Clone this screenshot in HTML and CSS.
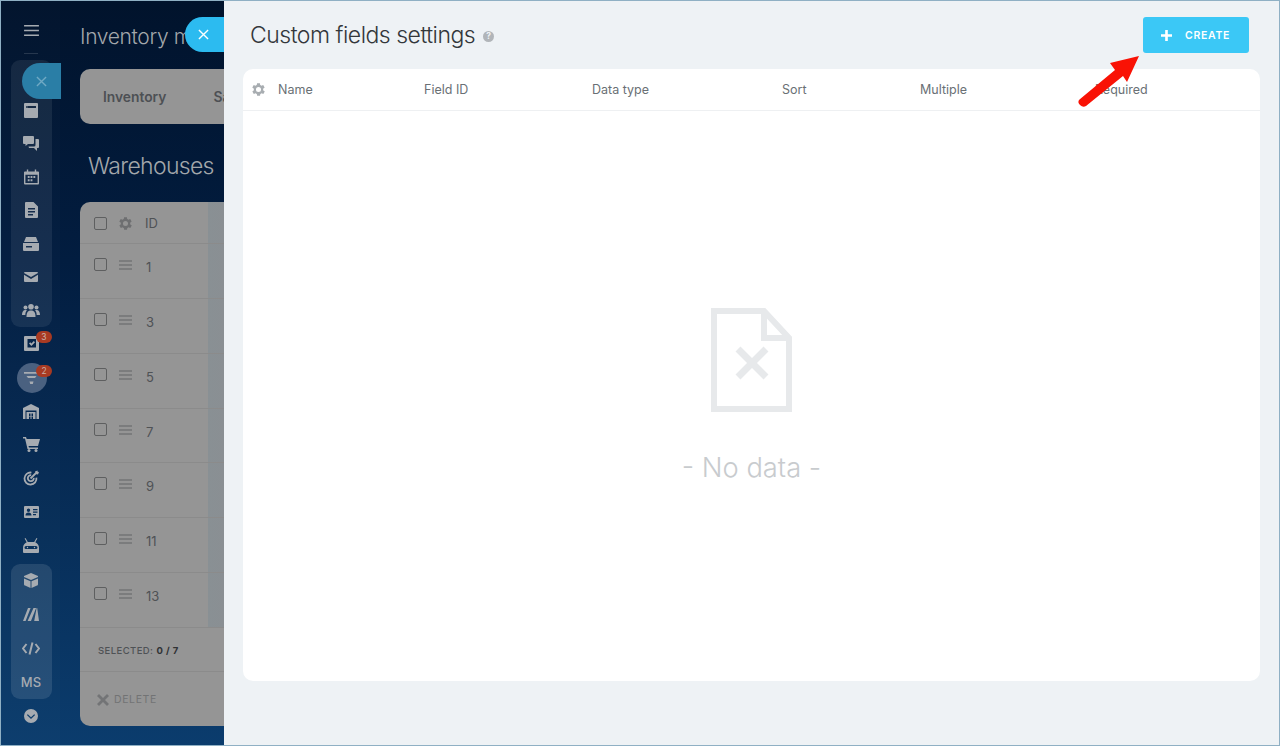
FILE: index.html
```html
<!DOCTYPE html>
<html lang="en">
<head>
<meta charset="utf-8">
<title>Custom fields settings</title>
<link rel="stylesheet" href="styles.css">
</head>
<body>
<div class="app">
  <nav class="sidebar">
    <div class="item burger"><svg viewBox="0 0 16 14" width="15" height="13"><path d="M0 1h16v1.600H0zM0 6.200h16v1.600H0zM0 11.400h16V13H0z"/></svg></div>
    <div class="group">
      <div class="item"></div>
      <div class="item"><svg viewBox="0 0 14 15" width="14" height="15"><path fill-rule="evenodd" d="M1 0h12a1 1 0 0 1 1 1v13a1 1 0 0 1-1 1H1a1 1 0 0 1-1-1V1a1 1 0 0 1 1-1zm1 3v2h10V3zm0 .800h2v.500H2z"/></svg></div>
      <div class="item"><svg viewBox="0 0 16 15" width="16" height="15"><path d="M1 0h9a1 1 0 0 1 1 1v6a1 1 0 0 1-1 1H5L2.500 10V8H1a1 1 0 0 1-1-1V1a1 1 0 0 1 1-1z"/><path d="M12.500 3H15a1 1 0 0 1 1 1v7a1 1 0 0 1-1 1h-1v3l-3-3H6l-.5-1.500H11a1.500 1.500 0 0 0 1.500-1.500z"/></svg></div>
      <div class="item"><svg viewBox="0 0 16 16" width="15" height="16"><path fill-rule="evenodd" d="M3 0h1.500v2h7V0H13v2h2a1 1 0 0 1 1 1v12a1 1 0 0 1-1 1H1a1 1 0 0 1-1-1V3a1 1 0 0 1 1-1h2zM1.500 5.500v9h13v-9zM4 7h2v2H4zm3 0h2v2H7zm3 0h2v2h-2zM4 10.500h2v2H4zm3 0h2v2H7z"/></svg></div>
      <div class="item"><svg viewBox="0 0 13 16" width="13" height="16"><path fill-rule="evenodd" d="M1 0h7.500L13 4.500V15a1 1 0 0 1-1 1H1a1 1 0 0 1-1-1V1a1 1 0 0 1 1-1zm2 6v1.400h7V6zm0 3v1.400h7V9zm0 3v1.400h5V12z"/></svg></div>
      <div class="item"><svg viewBox="0 0 16 14" width="16" height="14"><path fill-rule="evenodd" d="M3 0h10l2 5H1zM0 6h16v7a1 1 0 0 1-1 1H1a1 1 0 0 1-1-1zm3 3v1.500h6V9z"/></svg></div>
      <div class="item"><svg viewBox="0 0 14 10" width="14" height="10"><path d="M0 1a1 1 0 0 1 1-1h12a1 1 0 0 1 1 1L7 5zM0 2.800 7 7l7-4.200V9a1 1 0 0 1-1 1H1a1 1 0 0 1-1-1z"/></svg></div>
      <div class="item"><svg viewBox="0 0 18 13" width="18" height="13"><circle cx="9" cy="2.800" r="2.800"/><path d="M4.500 13c0-4 1-6.500 4.500-6.500s4.500 2.500 4.500 6.500z"/><circle cx="3.500" cy="3.500" r="2"/><circle cx="14.500" cy="3.500" r="2"/><path d="M0 11c0-3 1-5 3.500-5 .6 0 1 .1 1.400.3C3.800 7.500 3.400 9 3.300 11zM18 11c0-3-1-5-3.500-5-.6 0-1 .1-1.400.3 1.100 1.200 1.500 2.700 1.600 4.700z"/></svg></div>
    </div>
    <div class="item plain"><svg viewBox="0 0 15 15" width="15" height="15"><path fill-rule="evenodd" d="M1 0h13a1 1 0 0 1 1 1v13a1 1 0 0 1-1 1H1a1 1 0 0 1-1-1V1a1 1 0 0 1 1-1zm2.500 3v8.500H12V3zm1.500 4.500L6.200 6.300l1.200 1.200 2.400-2.500L11 6.200 7.400 9.900z"/></svg><span class="badge">3</span></div>
    <div class="item plain"><span class="halo"></span><svg viewBox="0 0 15 12" width="15" height="12"><path d="M0 0h15v1.800H0zM2.500 4h10L11 6H4zM5.500 9.500h4L8.800 12H6.200z"/></svg><span class="badge">2</span></div>
    <div class="item plain"><svg viewBox="0 0 16 15" width="16" height="15"><path fill-rule="evenodd" d="M8 0l8 4v11h-2.500V6.500h-11V15H0V4zM3.500 8h9v7h-9zM6 9.500V12h1.500V9.500zm2.500 0V12H10V9.500zM6 12.500V15h1.500v-2.500zm2.500 0V15H10v-2.500z"/></svg></div>
    <div class="item plain"><svg viewBox="0 0 17 15" width="17" height="15"><path d="M0 0h3l.7 2H17l-2 7H5.500L6 10.500h9V12H4.500L2 1.500H0z"/><circle cx="6" cy="13.500" r="1.500"/><circle cx="13" cy="13.500" r="1.500"/></svg></div>
    <div class="item plain"><svg viewBox="0 0 16 16" width="16" height="16" class="ring"><path d="M13.400 7.600A6 6 0 1 1 8.400 2.600M10.800 7.800A3 3 0 1 1 8.200 5.200"/><path d="M7.500 8.500 13 3"/><path class="tip" d="M12 1.500l2.500-1 .2 1.300 1.300.2-1 2.500-2.500-.5z"/></svg></div>
    <div class="item plain"><svg viewBox="0 0 15 12" width="15" height="12"><path fill-rule="evenodd" d="M1 0h13a1 1 0 0 1 1 1v10a1 1 0 0 1-1 1H1a1 1 0 0 1-1-1V1a1 1 0 0 1 1-1zm3.500 2.500a1.700 1.700 0 1 0 0 3.400 1.700 1.700 0 0 0 0-3.400zM1.500 9.500h6c0-1.700-1.200-3-3-3s-3 1.300-3 3zM9 3v1.200h4.500V3zm0 2.500v1.200h4.500V5.500zM9 8v1.200h3V8z"/></svg></div>
    <div class="item plain"><svg viewBox="0 0 16 15" width="16" height="15"><path fill-rule="evenodd" d="M2.500 0l2.300 4h6.400l2.300-4 .9.500L12.300 4.300c2.200.9 3.700 3 3.700 5.700v4a1 1 0 0 1-1 1H1a1 1 0 0 1-1-1v-4c0-2.700 1.500-4.800 3.700-5.700L1.600.5zM3 8a1.500 1.500 0 0 0 0 3h10a1.500 1.500 0 0 0 0-3zm1.500.8a.7.700 0 1 1 0 1.400.7.700 0 0 1 0-1.400zm7 0a.7.700 0 1 1 0 1.400.7.700 0 0 1 0-1.400z"/></svg></div>
    <div class="group second">
      <div class="item wide"><svg viewBox="0 0 14 15" width="14" height="15"><path d="M7 0l7 3v1L7 7 0 4V3z"/><path d="M0 5.500l6.500 2.800V15L1 12.600a1.500 1.500 0 0 1-1-1.400zM14 5.500l-6.500 2.800V15l5.500-2.400a1.500 1.500 0 0 0 1-1.400z"/></svg></div>
      <div class="item wide"><svg viewBox="0 0 16 13" width="16" height="13"><path d="M5 0h2.600L2.600 13H0zM10.500 0h2.600L8 13H4.600zM13.600 0h.6L16 13h-4.800z"/></svg></div>
      <div class="item wide"><svg viewBox="0 0 18 13" width="18" height="13" class="code"><path d="M4.500 2 1 6.500 4.500 11M13.500 2 17 6.500 13.500 11M10.500 0.500 7.500 12.500"/></svg></div>
      <div class="item wide ms">MS</div>
    </div>
    <div class="item plain"><svg viewBox="0 0 14 14" width="14" height="14"><path fill-rule="evenodd" d="M7 0a7 7 0 1 1 0 14A7 7 0 0 1 7 0zM3.800 5.200 2.900 6.100 7 10l4.100-3.900-.9-.9L7 8.200z"/></svg></div>
  </nav>

  <main class="content">
    <h1 class="page-title">Inventory management</h1>
    <div class="tabs"><span>Inventory</span><span>Sales</span><span>Purchases</span></div>
    <h2 class="section-title">Warehouses</h2>
    <section class="table">
      <div class="shade"></div>
      <div class="row head"><span class="check"></span><svg class="gear" viewBox="3 3 18 18" width="13" height="13"><path d="M19.400 13a7.500 7.500 0 0 0 0-2l2.100-1.600-2-3.500-2.500 1a7.500 7.500 0 0 0-1.700-1L15 3.300h-4l-.4 2.600a7.500 7.500 0 0 0-1.700 1l-2.500-1-2 3.500L6.600 11a7.500 7.500 0 0 0 0 2l-2.100 1.600 2 3.500 2.500-1a7.500 7.500 0 0 0 1.700 1l.4 2.600h4l.4-2.600a7.500 7.500 0 0 0 1.700-1l2.500 1 2-3.500zM13 15.500a3.500 3.500 0 1 1 0-7 3.500 3.500 0 0 1 0 7z" transform="translate(-1 0)"/></svg><span class="num">ID</span></div>
      <div class="row"><span class="check"></span><span class="drag"></span><span class="num">1</span></div>
      <div class="row"><span class="check"></span><span class="drag"></span><span class="num">3</span></div>
      <div class="row"><span class="check"></span><span class="drag"></span><span class="num">5</span></div>
      <div class="row"><span class="check"></span><span class="drag"></span><span class="num">7</span></div>
      <div class="row"><span class="check"></span><span class="drag"></span><span class="num">9</span></div>
      <div class="row"><span class="check"></span><span class="drag"></span><span class="num">11</span></div>
      <div class="row"><span class="check"></span><span class="drag"></span><span class="num">13</span></div>
      <div class="selected"><span>SELECTED:</span><b>0 / 7</b></div>
      <div class="actions"><svg viewBox="0 0 12 12" width="12" height="12"><path d="M2 0l4 4 4-4 2 2-4 4 4 4-2 2-4-4-4 4-2-2 4-4-4-4z"/></svg>DELETE</div>
    </section>
  </main>
</div>

<div class="dim-close"><svg viewBox="0 0 12 12" width="11" height="11"><path d="M1 1l10 10M11 1 1 11"/></svg></div>

<aside class="slider">
  <button class="slider-close"><svg viewBox="0 0 12 12" width="11" height="11"><path d="M1 1l10 10M11 1 1 11"/></svg></button>
  <header class="slider-head">
    <h2 class="slider-title">Custom fields settings<span class="help">?</span></h2>
    <button class="create"><svg viewBox="0 0 10 10" width="11" height="11"><path d="M3.800 0h2.400v3.800H10v2.400H6.200V10H3.800V6.200H0V3.800h3.800z"/></svg><span>CREATE</span></button>
  </header>
  <section class="card">
    <div class="columns">
      <span class="col-gear"><svg viewBox="3 3 18 18" width="13" height="13"><path d="M19.400 13a7.500 7.500 0 0 0 0-2l2.100-1.600-2-3.500-2.500 1a7.500 7.500 0 0 0-1.700-1L15 3.300h-4l-.4 2.600a7.500 7.500 0 0 0-1.700 1l-2.500-1-2 3.500L6.600 11a7.500 7.500 0 0 0 0 2l-2.100 1.600 2 3.500 2.500-1a7.500 7.500 0 0 0 1.700 1l.4 2.600h4l.4-2.600a7.500 7.500 0 0 0 1.700-1l2.500 1 2-3.500zM13 15.500a3.500 3.500 0 1 1 0-7 3.500 3.500 0 0 1 0 7z" transform="translate(-1 0)"/></svg></span>
      <span>Name</span><span>Field ID</span><span>Data type</span><span>Sort</span><span>Multiple</span><span>Required</span>
    </div>
    <div class="empty">
      <svg class="empty-icon" viewBox="0 0 81 104" width="81" height="104"><path d="M3 3h50l25 27v71H3z"/><path d="M53 3v27h25"/><path d="M27 41l28 28M55 41 27 69" class="x"/></svg>
      <p>- No data -</p>
    </div>
  </section>
  <svg class="arrow" viewBox="0 0 70 60" width="70" height="60"><path d="M3.500 47.500 39 18 34 11 63 4 51 30 47 24 10 54Q7 56 4 53 1 50 3.500 47.500z"/></svg>
</aside>
<div class="frame"></div>
</body>
</html>
```
FILE: styles.css
```css
* { box-sizing: border-box; }
html, body { margin: 0; height: 100%; }
body {
  position: relative;
  width: 1280px;
  height: 746px;
  overflow: hidden;
  font-family: Inter, "Liberation Sans", sans-serif;
  background: linear-gradient(180deg, #01132c 0%, #021d40 35%, #0b3c6d 100%);
}
.app { display: flex; height: 746px; }

/* sidebar */
.sidebar {
  flex: none;
  width: 60px;
  padding: 14px 8px 0 11px;
  display: flex;
  flex-direction: column;
  background: rgba(255, 255, 255, 0.012);
}
.item {
  position: relative;
  flex: none;
  height: 33.400px;
  width: 40px;
  display: flex;
  align-items: center;
  justify-content: center;
}
.item.plain { height: 33.600px; }
.item.wide { height: 33.750px; }
.item svg { position: relative; fill: #a6abb1; }
.burger { width: 41px; height: 33.600px; margin-bottom: 12.400px; }
.burger::after {
  content: "";
  position: absolute;
  left: 13px;
  top: 38.500px;
  width: 14px;
  height: 1px;
  background: rgba(255, 255, 255, 0.14);
}
.group {
  flex: none;
  width: 41px;
  border-radius: 9px;
  background: rgba(255, 255, 255, 0.075);
}
.second { margin-top: 1.500px; background: rgba(255, 255, 255, 0.11); }
.badge {
  position: absolute;
  top: 4px;
  left: 25px;
  width: 16px;
  height: 12px;
  border-radius: 6px;
  background: #a83a22;
  color: #c9b0a8;
  font-size: 8.500px;
  line-height: 12px;
  text-align: center;
}
.halo {
  position: absolute;
  left: 6px;
  top: 1.800px;
  width: 30px;
  height: 30px;
  border-radius: 50%;
  background: #4a6180;
}
.ring { fill: none !important; stroke: #a6abb1; stroke-width: 1.800; }
.ring .tip { fill: #a6abb1; stroke: none; }
.code { fill: none !important; stroke: #a6abb1; stroke-width: 2; }
.ms { color: #a6abb1; font-size: 13px; font-weight: 500; }

/* dimmed page */
.content { flex: 1; min-width: 0; padding: 0 0 0 20px; }
.page-title {
  margin: 24px 0 0;
  height: 45px;
  font-size: 21px;
  line-height: 25px;
  font-weight: 300;
  letter-spacing: -.35px;
  color: #a3a7ab;
  white-space: nowrap;
}
.tabs {
  height: 55px;
  width: 400px;
  display: flex;
  align-items: center;
  gap: 47px;
  padding: 1px 0 0 23px;
  border-radius: 10px;
  background: #959595;
  color: #4d5054;
  font-size: 13.800px;
  font-weight: 600;
}
.section-title {
  margin: 27px 0 21px 8px;
  height: 30px;
  font-size: 23px;
  line-height: 30px;
  font-weight: 300;
  letter-spacing: -.7px;
  color: #a3a7ab;
}
.table {
  position: relative;
  width: 400px;
  height: 524px;
  border-radius: 10px;
  background: #959595;
  overflow: hidden;
}
.shade {
  position: absolute;
  left: 128px;
  width: 16px;
  top: 0;
  height: 426px;
  background: linear-gradient(90deg, #899094, #8a8f93);
}
.row {
  position: relative;
  height: 54.850px;
  padding: 14px 0 0 14px;
  display: flex;
  align-items: flex-start;
  border-bottom: 1px solid #8b8b8b;
  color: #4f5255;
  font-size: 13px;
}
.row.head { height: 42px; align-items: center; padding-top: 1px; }
.check {
  flex: none;
  width: 13px;
  height: 13px;
  margin-right: 12px;
  border: 1px solid #5e5f60;
  border-radius: 2px;
}
.gear { flex: none; fill: #6e6f71; margin-right: 13px; }
.drag {
  flex: none;
  width: 13px;
  height: 10px;
  margin: 2px 14px 0 0;
  border-top: 2px solid #7b7c7d;
  border-bottom: 2px solid #7b7c7d;
  background: linear-gradient(#7b7c7d, #7b7c7d) center / 100% 2px no-repeat;
}
.row .num { line-height: 15px; }
.row:not(.head) .num { margin-top: 2px; }
.selected {
  height: 44px;
  padding: 2px 18px 0;
  display: flex;
  align-items: center;
  gap: 3px;
  font-size: 9.500px;
  font-weight: 500;
  letter-spacing: .42px;
  color: #4f5255;
  border-bottom: 1px solid #8b8b8b;
}
.selected b { color: #303234; font-weight: 700; }
.actions {
  height: 54px;
  padding: 2px 18px 0 17px;
  display: flex;
  align-items: center;
  gap: 5px;
  font-size: 10.500px;
  letter-spacing: .6px;
  color: #727374;
}
.actions svg { fill: #737476; }

/* close tabs */
.dim-close {
  position: absolute;
  left: 22px;
  top: 63px;
  width: 39px;
  height: 36px;
  border-radius: 18px 0 0 18px;
  background: #2a7ea6;
  display: flex;
  align-items: center;
  justify-content: center;
}
.dim-close svg, .slider-close svg { fill: none; stroke: #6fa9c4; stroke-width: 1.500; }
.slider-close svg { stroke: #fff; margin-left: -2px; }
.slider-close {
  position: absolute;
  left: -39px;
  top: 17px;
  width: 39px;
  height: 35px;
  padding: 0;
  border: 0;
  border-radius: 18px 0 0 18px;
  background: #2cbbf0;
  display: flex;
  align-items: center;
  justify-content: center;
}

/* slider */
.slider {
  position: absolute;
  left: 224px;
  top: 0;
  width: 1056px;
  height: 746px;
  padding: 17px 20px 65px 19px;
  display: flex;
  flex-direction: column;
  background: #eef2f5;
}
.slider-head {
  flex: none;
  height: 52px;
  display: flex;
  justify-content: space-between;
  align-items: flex-start;
  padding: 0 11px 0 7px;
}
.slider-title {
  margin: 0;
  display: flex;
  align-items: center;
  height: 35px;
  font-size: 23px;
  font-weight: 300;
  letter-spacing: -.5px;
  color: #33373b;
}
.help {
  width: 11px;
  height: 11px;
  margin: 3px 0 0 8px;
  border-radius: 50%;
  background: #b1b5b9;
  color: #eef2f5;
  font-size: 8.500px;
  font-weight: 700;
  letter-spacing: 0;
  line-height: 11px;
  text-align: center;
}
.create {
  width: 106px;
  height: 36px;
  padding: 0 0 0 18px;
  border: 0;
  border-radius: 3px;
  background: #3bc8f6;
  color: #fff;
  font: 600 10.500px Inter, "Liberation Sans", sans-serif;
  letter-spacing: .7px;
  display: flex;
  align-items: center;
  gap: 13px;
}
.create svg { fill: #fff; }
.card {
  flex: 1;
  border-radius: 10px;
  background: #fff;
  display: flex;
  flex-direction: column;
}
.columns {
  flex: none;
  height: 42px;
  display: grid;
  grid-template-columns: 35px 146px 168px 190px 138px 175px 1fr;
  align-items: center;
  border-bottom: 1px solid #eef0f2;
  font-size: 12.500px;
  color: #6a7075;
}
.col-gear { display: flex; padding-left: 9px; }
.col-gear svg { fill: #a8adb1; }
.empty {
  flex: 1;
  display: flex;
  flex-direction: column;
  align-items: center;
  padding: 197px 0 0;
}
.empty-icon { fill: none; stroke: #e7e9eb; stroke-width: 6; }
.empty-icon .x { stroke-width: 7; }
.empty p {
  margin: 38px 0 0;
  font-size: 27.300px;
  line-height: 36px;
  font-weight: 300;
  color: #c8cbce;
}
.arrow {
  position: absolute;
  left: 852px;
  top: 52px;
  fill: #f91205;
}

.frame {
  position: absolute;
  inset: 0;
  border: 1px solid #8fb0c4;
  pointer-events: none;
}
```
